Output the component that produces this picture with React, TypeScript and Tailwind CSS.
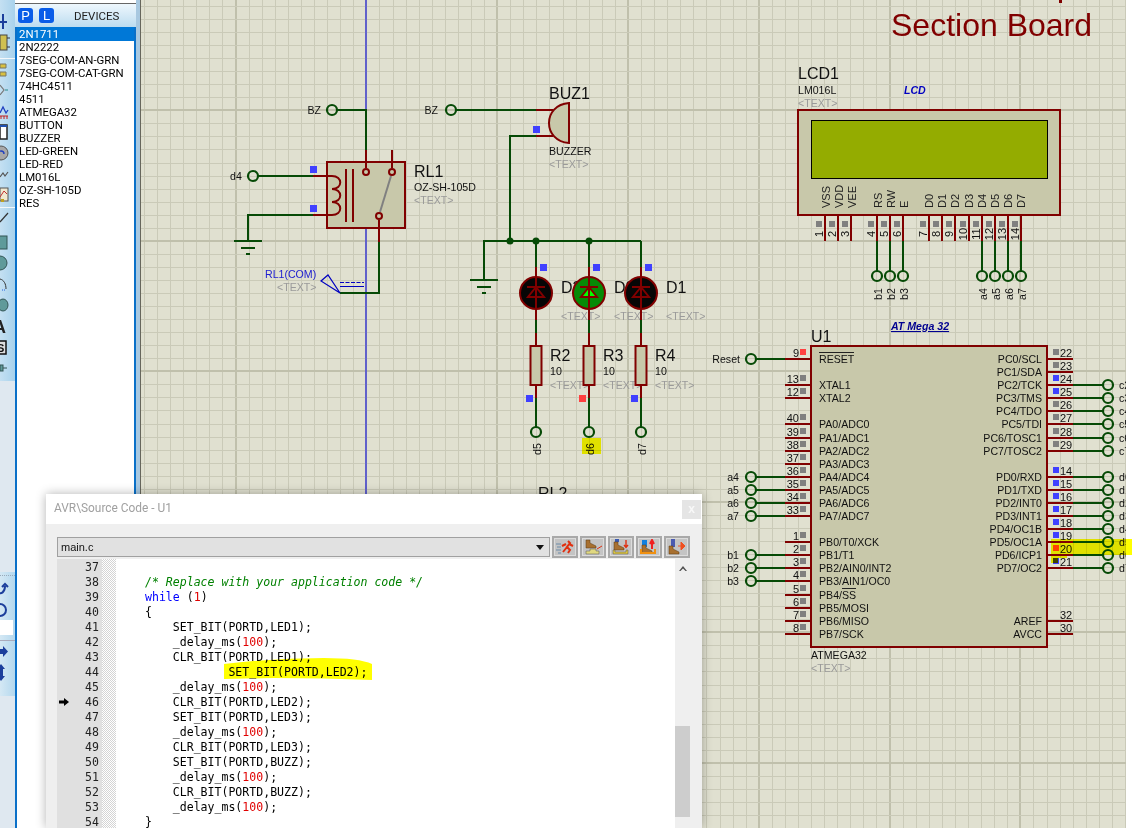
import React from 'react';

const WIRE = '#064a06';
const PIN = '#800000';
const BODY = '#c8c8aa';
const BLUE = '#4040ff';
const RED = '#ff4040';
const GREY = '#808080';

const devices = [
  '2N1711', '2N2222', '7SEG-COM-AN-GRN', '7SEG-COM-CAT-GRN', '74HC4511', '4511', 'ATMEGA32',
  'BUTTON', 'BUZZER', 'LED-GREEN', 'LED-RED', 'LM016L', 'OZ-SH-105D', 'RES',
];

// x, y, etc. are page coordinates: the svg's viewBox starts at the canvas's left edge
function T({ x, y, s = 10.6, c = '#111', a, r, children, className }: {
  x: number; y: number; s?: number; c?: string; a?: 'start' | 'middle' | 'end'; r?: boolean;
  children: React.ReactNode; className?: string;
}) {
  return (
    <text x={x} y={y} fontSize={s} fill={c} textAnchor={a} className={className}
      transform={r ? `rotate(-90 ${x} ${y})` : undefined}>
      {children}
    </text>
  );
}

const TextTag = ({ x, y, a, r }: { x: number; y: number; a?: 'start' | 'middle' | 'end'; r?: boolean }) => (
  <T x={x} y={y} c="#9a9a9a" a={a} r={r}>{'<TEXT>'}</T>
);

const Sq = ({ x, y, c = BLUE, s = 7 }: { x: number; y: number; c?: string; s?: number }) => (
  <rect x={x - s / 2} y={y - s / 2} width={s} height={s} fill={c} shapeRendering="crispEdges" />
);

const Wire = ({ d, c = WIRE }: { d: string; c?: string }) => (
  <path d={d} fill="none" stroke={c} strokeWidth={2} />
);

const Term = ({ x, y }: { x: number; y: number }) => (
  <circle cx={x} cy={y} r={5} fill="none" stroke={WIRE} strokeWidth={2.2} />
);

function Grid() {
  const xs = Array.from({ length: 76 }, (_, i) => 144 + i * 13.08);
  const ys = Array.from({ length: 64 }, (_, i) => 5.9 + i * 13.05);
  return (
    <g shapeRendering="crispEdges">
      {xs.map((x, i) => (
        <line key={i} x1={Math.round(x)} x2={Math.round(x)} y1={0} y2={828}
          stroke={i % 10 === 7 ? '#c0c0ac' : '#cacab8'} strokeWidth={i % 10 === 7 ? 2 : 1} />
      ))}
      {ys.map((y, i) => (
        <line key={i} y1={Math.round(y)} y2={Math.round(y)} x1={141} x2={1126}
          stroke={i % 10 === 8 ? '#c0c0ac' : '#cacab8'} strokeWidth={i % 10 === 8 ? 2 : 1} />
      ))}
    </g>
  );
}

function Ground({ x, y }: { x: number; y: number }) {
  return (
    <g stroke={WIRE} strokeWidth={2}>
      <line x1={x - 14} x2={x + 14} y1={y} y2={y} />
      <line x1={x - 7} x2={x + 7} y1={y + 7} y2={y + 7} />
      <line x1={x - 2} x2={x + 2} y1={y + 13} y2={y + 13} />
    </g>
  );
}

function Relay() {
  return (
    <g>
      <T x={321} y={114} a="end">BZ</T>
      <Term x={332} y={110} />
      <Wire d="M337 110H366V150" />
      <Wire d="M379 216V242" c={PIN} />
      <Wire d="M379 242V293H340" />
      <rect x={327} y={162} width={78} height={66} fill={BODY} stroke={PIN} strokeWidth={2} />
      <Wire d="M366 150V168M392 150V168M379 220V242" c={PIN} />
      <line x1={391} y1={176} x2={380} y2={212} stroke="#808080" strokeWidth={2} />
      <circle cx={366} cy={172} r={3} fill={BODY} stroke={PIN} strokeWidth={2} />
      <circle cx={392} cy={172} r={3} fill={BODY} stroke={PIN} strokeWidth={2} />
      <circle cx={379} cy={216} r={3} fill={BODY} stroke={PIN} strokeWidth={2} />
      <Wire d="M346 169V222M353 169V222" c={PIN} />
      <Wire d="M313 176H332C343 176 343 189 332 189C343 189 343 202 332 202C343 202 343 215 332 215H313" c={PIN} />
      <T x={230} y={180}>d4</T>
      <Term x={253} y={176} />
      <Wire d="M258 176H313M313 215H248V240" />
      <Ground x={248} y={241} />
      <Sq x={313.5} y={169} />
      <Sq x={313.5} y={208} />
      <T x={414} y={177} s={16}>RL1</T>
      <T x={414} y={191}>OZ-SH-105D</T>
      <TextTag x={414} y={204} />
      <T x={265} y={278} c="#2020d0">RL1(COM)</T>
      <TextTag x={277} y={291} />
      <path d="M340 293L328 275L321 281Z" fill="none" stroke="#0000c0" strokeWidth={1.2} />
      <line x1={340} x2={364} y1={282.5} y2={282.5} stroke="#0000c0" strokeDasharray="4 1.5" />
      <line x1={340} x2={364} y1={286.5} y2={286.5} stroke="#0000c0" />
    </g>
  );
}

function Buzzer() {
  return (
    <g>
      <T x={438} y={114} a="end">BZ</T>
      <Term x={451} y={110} />
      <Wire d="M456 110H536M536 136H510V241" />
      <Wire d="M536 110H553M536 136H553" c={PIN} />
      <path d="M569 103V143C556 142 549 133 549 123C549 113 556 104 569 103Z" fill={BODY} stroke={PIN} strokeWidth={2} />
      <Sq x={536.5} y={129.5} />
      <T x={549} y={99} s={16}>BUZ1</T>
      <T x={549} y={155}>BUZZER</T>
      <TextTag x={549} y={168} />
      <Wire d="M484 280V241H641" />
      <Ground x={484} y={280} />
      {[510, 536, 589].map((x) => (
        <circle key={x} cx={x} cy={241} r={3.5} fill={WIRE} />
      ))}
    </g>
  );
}

function LedBranch({ x, label, name, lit, mark, term, hl }: {
  x: number; label: string; name: string; lit?: boolean; mark: string; term: string; hl?: boolean;
}) {
  return (
    <g>
      <T x={x + 25} y={293} s={16}>{label}</T>
      <TextTag x={x + 25} y={320} />
      <Wire d={`M${x} 241V267`} />
      <Wire d={`M${x} 267V320`} c={PIN} />
      <circle cx={x} cy={293} r={16} fill={lit ? '#068a06' : '#060606'} stroke={PIN} strokeWidth={2} />
      <path d={`M${x} 287L${x + 8} 297H${x - 8}Z`} fill={lit ? '#00ff00' : 'none'} stroke={PIN} strokeWidth={2} />
      <line x1={x - 9} x2={x + 9} y1={287} y2={287} stroke={PIN} strokeWidth={2} />
      <line x1={x} x2={x} y1={277} y2={309} stroke={PIN} strokeWidth={2} />
      <Sq x={x + 7} y={267} />
      <Wire d={`M${x} 320V333`} />
      <Wire d={`M${x} 333V398`} c={PIN} />
      <rect x={x - 5.5} y={346} width={11} height={39} fill={BODY} stroke={PIN} strokeWidth={2} />
      <T x={x + 14} y={361} s={16}>{name}</T>
      <T x={x + 14} y={375}>10</T>
      <TextTag x={x + 14} y={389} />
      <Sq x={x - 6.5} y={398} c={mark} />
      <Wire d={`M${x} 398V427`} />
      <Term x={x} y={432} />
      <T x={x + 5} y={455} r>{term}</T>
      {hl && <rect x={582} y={438} width={19} height={16} fill="#ffff00" className="mix-blend-multiply" />}
    </g>
  );
}

const lcdPins = [825, 838, 851, 877, 890, 903, 929, 942, 955, 969, 982, 995, 1008, 1021];
const lcdLabels: [string, number][] = [
  ['VSS', 830], ['VDD', 843], ['VEE', 856], ['RS', 882], ['RW', 895], ['E', 908],
  ['D0', 933], ['D1', 946], ['D2', 959], ['D3', 973], ['D4', 986], ['D5', 999], ['D6', 1012], ['D7', 1025],
];

function Lcd() {
  return (
    <g>
      <T x={798} y={79} s={16}>LCD1</T>
      <T x={798} y={94}>LM016L</T>
      <TextTag x={798} y={107} />
      <T x={904} y={94} c="#0000c0" className="font-bold italic">LCD</T>
      {lcdPins.map((x, i) => (
        <g key={x}>
          <Wire d={`M${x} 215V241`} c={PIN} />
          <Sq x={x - 6.5} y={223.5} c={GREY} s={6} />
          <T x={x - 2} y={234} s={11} a="middle" r>{i + 1}</T>
        </g>
      ))}
      <rect x={798} y={110} width={262} height={105} fill={BODY} stroke={PIN} strokeWidth={2} />
      <rect x={811.5} y={120.5} width={236} height={58} fill="#94ac00" stroke="#000" />
      {lcdLabels.map(([l, x]) => (
        <T key={l} x={x} y={208} s={11} c="#222" r>{l}</T>
      ))}
      {[[877, 'b1'], [890, 'b2'], [903, 'b3'], [982, 'a4'], [995, 'a5'], [1008, 'a6'], [1021, 'a7']].map(([x, l]) => (
        <g key={l as string}>
          <Wire d={`M${x} 241V271`} />
          <Term x={x as number} y={276} />
          <T x={(x as number) + 5} y={300} r>{l}</T>
        </g>
      ))}
    </g>
  );
}

const leftPins: [string, number, string, string?][] = [
  ['XTAL1', 385, '13'], ['XTAL2', 398, '12'],
  ['PA0/ADC0', 424, '40'], ['PA1/ADC1', 438, '39'], ['PA2/ADC2', 451, '38'], ['PA3/ADC3', 464, '37'],
  ['PA4/ADC4', 477, '36', 'a4'], ['PA5/ADC5', 490, '35', 'a5'], ['PA6/ADC6', 503, '34', 'a6'], ['PA7/ADC7', 516, '33', 'a7'],
  ['PB0/T0/XCK', 542, '1'], ['PB1/T1', 555, '2', 'b1'], ['PB2/AIN0/INT2', 568, '3', 'b2'], ['PB3/AIN1/OC0', 581, '4', 'b3'],
  ['PB4/SS', 595, '5'], ['PB5/MOSI', 608, '6'], ['PB6/MISO', 621, '7'], ['PB7/SCK', 634, '8'],
];

const rightPins: [string, number, string, string, string?][] = [
  ['PC0/SCL', 359, '22', GREY], ['PC1/SDA', 372, '23', GREY], ['PC2/TCK', 385, '24', BLUE, 'c2'], ['PC3/TMS', 398, '25', BLUE, 'c3'],
  ['PC4/TDO', 411, '26', GREY, 'c4'], ['PC5/TDI', 424, '27', GREY, 'c5'], ['PC6/TOSC1', 438, '28', GREY, 'c6'], ['PC7/TOSC2', 451, '29', GREY, 'c7'],
  ['PD0/RXD', 477, '14', BLUE, 'd0'], ['PD1/TXD', 490, '15', BLUE, 'd1'], ['PD2/INT0', 503, '16', BLUE, 'd2'], ['PD3/INT1', 516, '17', BLUE, 'd3'],
  ['PD4/OC1B', 529, '18', BLUE, 'd4'], ['PD5/OC1A', 542, '19', BLUE, 'd5'], ['PD6/ICP1', 555, '20', RED, 'd6'], ['PD7/OC2', 568, '21', BLUE, 'd7'],
];

function Mcu() {
  return (
    <g>
      <T x={811} y={342} s={16}>U1</T>
      <T x={891} y={330} c="#000090" className="font-bold italic underline">AT Mega 32</T>
      <T x={811} y={659}>ATMEGA32</T>
      <TextTag x={811} y={672} />
      <rect x={811} y={346} width={236} height={301} fill={BODY} stroke={PIN} strokeWidth={2} />

      <T x={740} y={363} a="end">Reset</T>
      <Term x={751} y={359} />
      <Wire d="M756 359H785" />
      <Wire d="M785 359H811" c={PIN} />
      <T x={799} y={357} s={11} a="end">9</T>
      <Sq x={803} y={352} c={RED} s={6} />
      <T x={819} y={363}>RESET</T>
      <line x1={819} x2={854} y1={352.5} y2={352.5} stroke="#222" />

      {leftPins.map(([name, y, num, net]) => (
        <g key={name}>
          <Wire d={`M785 ${y}H811`} c={PIN} />
          <T x={799} y={y - 2} s={11} a="end">{num}</T>
          <Sq x={803} y={y - 7} c={GREY} s={6} />
          <T x={819} y={y + 4}>{name}</T>
          {net && (
            <>
              <T x={739} y={y + 4} a="end">{net}</T>
              <Term x={751} y={y} />
              <Wire d={`M756 ${y}H785`} />
            </>
          )}
        </g>
      ))}
      <line x1={842} x2={856} y1={588.5} y2={588.5} stroke="#222" />

      {rightPins.map(([name, y, num, mark, net]) => (
        <g key={name}>
          <Wire d={`M1047 ${y}H1073`} c={PIN} />
          <T x={1060} y={y - 2} s={11}>{num}</T>
          <Sq x={1055.5} y={y - 7} c={mark} s={6} />
          <T x={1042} y={y + 4} a="end">{name}</T>
          {net && (
            <>
              <Wire d={`M1073 ${y}H1103`} />
              <Term x={1108} y={y} />
              <T x={1119} y={y + 4}>{net}</T>
            </>
          )}
        </g>
      ))}
      {([['AREF', 621, '32'], ['AVCC', 634, '30']] as const).map(([name, y, num]) => (
        <g key={name}>
          <Wire d={`M1047 ${y}H1073`} c={PIN} />
          <T x={1060} y={y - 2} s={11}>{num}</T>
          <T x={1042} y={y + 4} a="end">{name}</T>
        </g>
      ))}
      <path d="M1051 539H1126V555H1067V558H1058V563H1051Z" fill="#ffff00" className="mix-blend-multiply" />
    </g>
  );
}

function Schematic() {
  return (
    <svg width={985} height={828} viewBox="141 0 985 828" className="block">
      <Grid />
      <line x1={366} x2={366} y1={0} y2={500} stroke="#2020e0" strokeWidth={1.2} />
      <rect x={1059} y={0} width={3} height={3} fill={PIN} />
      <T x={891} y={36} s={32} c={PIN}>Section Board</T>
      <Relay />
      <Buzzer />
      <LedBranch x={536} label="D3" name="R2" mark={BLUE} term="d5" />
      <LedBranch x={589} label="D2" name="R3" mark={RED} term="d6" lit hl />
      <LedBranch x={641} label="D1" name="R4" mark={BLUE} term="d7" />
      <T x={538} y={499} s={16}>RL2</T>
      <Lcd />
      <Mcu />
    </svg>
  );
}

const Tool = ({ children, className = 'h-[21px]' }: { children: React.ReactNode; className?: string }) => (
  <svg width={15} viewBox="0 0 15 21" className={`block shrink-0 ${className}`}>{children}</svg>
);

function Toolbar() {
  return (
    <div className="w-[15px] h-full shrink-0 bg-[#dfe8f0] flex flex-col overflow-hidden">
      <div className="h-[381px] shrink-0 bg-gradient-to-r from-[#c4e0f2] to-[#a8d2ec] pt-[11px] flex flex-col">
        <Tool><path d="M3 3V18M0 11H7" stroke="#1c3f9c" strokeWidth={2} /></Tool>
        <Tool><rect x={0} y={3} width={7} height={15} fill="#cfc050" stroke="#444" /><path d="M7 6H10M7 15H10" stroke="#333" /></Tool>
        <div className="h-px mt-[5px] bg-[#f4f8fb]" />
        <Tool><path d="M0 5H6V9H0ZM0 13H6V17H0Z" fill="#d8c040" stroke="#776" /></Tool>
        <Tool><path d="M0 5L4 10L0 15" fill="none" stroke="#777" strokeWidth={1.2} /><path d="M5 10H8" stroke="#2a8a8a" /></Tool>
        <Tool><path d="M0 12L3 6L6 12L8 9" fill="none" stroke="#2040c0" strokeWidth={1.3} /><path d="M0 15H8M1 15V18M4 15V18M7 15V18" stroke="#c02020" /></Tool>
        <Tool><rect x={0} y={3} width={7} height={14} fill="#fff" stroke="#222" strokeWidth={1.5} /><rect x={0} y={3} width={7} height={2} fill="#2050b0" /></Tool>
        <Tool><circle cx={1} cy={10} r={7} fill="#a8a8a8" stroke="#555" /><path d="M-2 11A3 3 0 0 1 4 11" fill="none" stroke="#2040c0" strokeWidth={1.4} /></Tool>
        <Tool><path d="M0 13L3 9L5 12L8 8" fill="none" stroke="#555" strokeWidth={1.2} /></Tool>
        <Tool><rect x={0} y={3} width={8} height={13} fill="#f0e8d0" stroke="#555" /><path d="M0 12L4 6L7 9" fill="none" stroke="#c03030" /><rect x={1} y={14} width={3} height={3} fill="#c0a020" /></Tool>
        <div className="h-px mt-px bg-[#f4f8fb]" />
        <svg width={15} viewBox="0 0 15 17" className="block shrink-0 h-[17px]"><line x1={0} y1={14} x2={8} y2={5} stroke="#333" strokeWidth={1.2} /></svg>
        <Tool className="h-[21px] mt-[7px]"><rect x={-4} y={4} width={11} height={13} fill="#5f9a9a" stroke="#355" /></Tool>
        <Tool><circle cx={0} cy={10} r={7} fill="#5f9a9a" stroke="#355" /></Tool>
        <Tool><path d="M0 5C4 6 6 10 6 15" fill="none" stroke="#333" /><path d="M2 16H6" stroke="#2060e0" strokeDasharray="1 1" /></Tool>
        <Tool><ellipse cx={3} cy={10} rx={5} ry={6} fill="#5f9a9a" stroke="#355" /></Tool>
        <Tool><text x={-7} y={17} fontSize={18} fill="#222" className="font-bold">A</text></Tool>
        <Tool><rect x={-2} y={4} width={8} height={13} fill="#ddd" stroke="#111" strokeWidth={1.5} /><text x={-3} y={15} fontSize={11} fill="#111" className="font-bold">S</text></Tool>
        <Tool><rect x={0} y={7} width={3} height={6} fill="#5f9a9a" stroke="#355" /><path d="M3 10H7" stroke="#355" /></Tool>
      </div>
      <div className="mt-[191px] h-[124px] shrink-0 bg-gradient-to-r from-[#d4e8f4] to-[#b4d8ee] pt-[3px] flex flex-col">
        <div className="h-px border-t border-dotted border-[#9ab]" />
        <Tool className="h-[21px] mt-[2px]"><path d="M0 14C3 17 7 14 7 8M4 9L7 6L10 9" fill="none" stroke="#1c3f9c" strokeWidth={2} transform="translate(-2 0)" /></Tool>
        <Tool className="h-[21px]"><circle cx={0} cy={11} r={6} fill="none" stroke="#1c3f9c" strokeWidth={2} /></Tool>
        <div className="w-[13px] h-[15px] shrink-0 bg-white" />
        <div className="h-px mt-[5px] bg-[#aab]" />
        <Tool><path d="M0 8H3V5L8 10.5L3 16V13H0Z" fill="#1c3f9c" /></Tool>
        <Tool><path d="M1 2L5 7H3V14H5L1 19L-3 14H-1V7H-3Z" fill="#1c3f9c" /></Tool>
      </div>
    </div>
  );
}

function DevicesPanel() {
  return (
    <div className="w-[121px] h-[825px] mt-[3px] shrink-0 flex flex-col border-x-2 border-[#0a70c8] bg-white">
      <div className="h-[24px] shrink-0 -mx-[2px] border-t border-[#666] bg-gradient-to-b from-[#eef7fd] to-[#bcdcf0] flex items-center pl-[3px]">
        <span className="w-[15px] h-[15px] rounded-[3px] bg-[#0a5ce8] text-white text-[13px] flex items-center justify-center">P</span>
        <span className="w-[15px] h-[15px] ml-[6px] rounded-[3px] bg-[#0a5ce8] text-white text-[13px] flex items-center justify-center">L</span>
        <span className="ml-[20px] pt-[2px] text-[11.5px] font-['Roboto',sans-serif] text-[#222]">DEVICES</span>
      </div>
      <ul className="font-['Roboto',sans-serif] text-[11.4px] leading-[13px] text-black">
        {devices.map((d, i) => (
          <li key={d} className={`pl-[2px] whitespace-nowrap ${i === 0 ? 'h-[14px] pt-px bg-[#0078d7] text-white' : 'h-[13px]'}`}>{d}</li>
        ))}
      </ul>
    </div>
  );
}

const BootFoot = ({ x = 5, y = 3 }: { x?: number; y?: number }) => (
  <path d={`M${x} ${y}H${x + 4}V${y + 3}L${x + 10} ${y + 6}V${y + 8}H${x}Z`} fill="#a87030" stroke="#5a3a10" strokeWidth={0.5} />
);

function DebugButton({ children }: { children: React.ReactNode }) {
  return (
    <div className="w-[26px] h-[22px] shrink-0 border-2 border-[#a9a9a9] bg-[#dcdcdc] flex items-center justify-center">
      <svg width={20} height={16} viewBox="0 0 20 16" className="bg-[#c4c4c4]">{children}</svg>
    </div>
  );
}

type Tok = { t: string; c?: string; i?: boolean };
const n = (t: string): Tok => ({ t, c: 'text-[#e00000]' });
const delay: Tok[] = [{ t: '    _delay_ms(' }, n('100'), { t: ');' }];

const code: Tok[][] = [
  [],
  [{ t: '/* Replace with your application code */', c: 'text-[#008000]', i: true }],
  [{ t: 'while', c: 'text-[#0000ff]' }, { t: ' (' }, n('1'), { t: ')' }],
  [{ t: '{' }],
  [{ t: '    SET_BIT(PORTD,LED1);' }],
  delay,
  [{ t: '    CLR_BIT(PORTD,LED1);' }],
  [{ t: '            SET_BIT(PORTD,LED2);' }],
  delay,
  [{ t: '    CLR_BIT(PORTD,LED2);' }],
  [{ t: '    SET_BIT(PORTD,LED3);' }],
  delay,
  [{ t: '    CLR_BIT(PORTD,LED3);' }],
  [{ t: '    SET_BIT(PORTD,BUZZ);' }],
  delay,
  [{ t: '    CLR_BIT(PORTD,BUZZ);' }],
  delay,
  [{ t: '}' }],
];

function SourceWindow() {
  return (
    <div className="absolute left-[46px] top-[494px] w-[656px] h-[334px] overflow-hidden bg-[#efefef] shadow-[0_0_10px_rgba(0,0,0,0.3)]">
      <div className="h-[30px] bg-white flex items-center justify-between pl-[8px] pr-[1px]">
        <span className="font-['Roboto',sans-serif] text-[11.9px] text-[#a0a0a0]">AVR\Source Code - U1</span>
        <span className="w-[19px] h-[19px] bg-[#e5e5e5] text-[#f8f8f8] text-[12px] font-bold flex items-center justify-center">x</span>
      </div>
      <div className="pl-[11px] pt-[12px] flex items-start gap-[2px] h-[35px]">
        <div className="w-[493px] h-[20px] mt-px border border-[#a0a0a0] bg-[#e1e1e1] flex items-center justify-between pl-[3px] pr-[5px] text-[11px] text-[#111]">
          <span>main.c</span>
          <svg width={8} height={5} viewBox="0 0 8 5"><path d="M0 0H8L4 5Z" fill="#111" /></svg>
        </div>
        <DebugButton>
          <path d="M1 5H6M2 8H6M1 11H6M3 14H6" stroke="#6a8aa8" />
          <path d="M13 2L15 4L12 8L15 11L13 14M12 8L8 13M11 5L7 7M14 5L18 7" fill="none" stroke="#e03010" strokeWidth={2} />
        </DebugButton>
        <DebugButton>
          <BootFoot x={3} y={1} />
          <path d="M3 14V12H7V10H13V12H16V15H3Z" fill="#e0d880" stroke="#555" strokeWidth={0.5} />
          <path d="M14 10L19 7" stroke="#e03010" />
        </DebugButton>
        <DebugButton>
          <rect x={4} y={0} width={4} height={3} fill="#3a5ab0" />
          <BootFoot x={3} y={3} />
          <path d="M2 11V15H17V11H15V13H4V11Z" fill="#e0c840" stroke="#555" strokeWidth={0.5} />
          <path d="M15 1V8M13 6L15 8.5L17 6" fill="none" stroke="#e03010" strokeWidth={1.4} />
        </DebugButton>
        <DebugButton>
          <rect x={3} y={1} width={5} height={7} fill="#1080e0" />
          <BootFoot x={3} y={6} />
          <path d="M1 10V15H17V10H15V13H3V10Z" fill="#f09010" />
          <path d="M13 10V2M11 5L13 1L15 5" fill="none" stroke="#f02020" strokeWidth={2} />
        </DebugButton>
        <DebugButton>
          <rect x={4} y={0} width={4} height={8} fill="#4a5ab0" />
          <BootFoot x={2} y={7} />
          <path d="M11 7H16M14 3L18 7L14 11Z" fill="#f05020" stroke="#f05020" />
        </DebugButton>
      </div>
      <div className="flex h-[270px] pl-[11px]">
        <div className="w-[45px] shrink-0 bg-[#e0e0e0] pt-[0.5px] font-['DejaVu_Sans_Mono',monospace] text-[11.55px] leading-[15px] text-right pr-[3px] text-[#222]">
          {code.map((_, i) => (
            <div key={i} className="h-[15px] relative">
              {i + 37}
              {i === 9 && (
                <svg width={10} height={8} viewBox="0 0 10 8" className="absolute left-[2px] top-[3px]">
                  <path d="M0 2.5H5V0L10 4L5 8V5.5H0Z" fill="#000" />
                </svg>
              )}
            </div>
          ))}
        </div>
        <div className="w-[14px] shrink-0 bg-[repeating-conic-gradient(#d4d4d4_0_25%,#ffffff_0_50%)] bg-[length:2px_2px]" />
        <div className="w-[559px] shrink-0 bg-white pl-[29px] pt-[0.5px] font-['DejaVu_Sans_Mono',monospace] text-[11.55px] leading-[15px] text-black whitespace-pre">
          {code.map((toks, i) => (
            <div key={i} className="h-[15px] relative">
              {toks.map((k, j) => (
                <span key={j} className={`${k.c ?? ''} ${k.i ? 'italic' : ''}`}>{k.t}</span>
              ))}
              {i === 7 && (
                <svg width={148} height={23} viewBox="0 0 148 23" className="absolute left-[79px] top-[-7px] mix-blend-multiply">
                  <path d="M0 6Q50 0 100 0Q135 0 148 6V22Q100 20 50 20L0 21Z" fill="#ffff00" />
                </svg>
              )}
            </div>
          ))}
        </div>
        <div className="w-[15px] shrink-0 flex flex-col items-center">
          <svg width={8} height={5} viewBox="0 0 8 5" className="mt-[7px]"><path d="M0 5L4 0L8 5L6.5 5L4 2.5L1.5 5Z" fill="#505050" /></svg>
          <div className="mt-[155px] w-full h-[91px] bg-[#cdcdcd]" />
        </div>
      </div>
    </div>
  );
}

export default function App() {
  return (
    <div className="relative w-[1132px] h-[828px] overflow-hidden flex bg-white font-['Liberation_Sans',Arial,sans-serif]">
      <Toolbar />
      <DevicesPanel />
      <div className="w-[4px] shrink-0 bg-[#a8c8e0]" />
      <div className="w-px shrink-0 bg-[#66665c]" />
      <div className="w-[985px] shrink-0 bg-[#e0e0d0] overflow-hidden">
        <Schematic />
      </div>
      <div className="w-[6px] shrink-0 pt-[539px]">
        <div className="h-[16px] bg-[#ffff00]" />
      </div>
      <SourceWindow />
    </div>
  );
}
